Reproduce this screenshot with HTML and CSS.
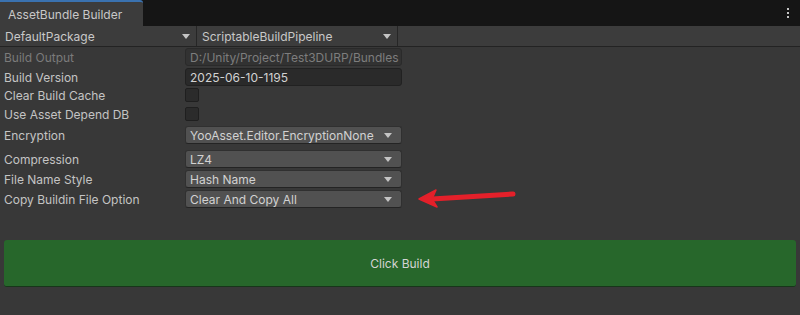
FILE: index.html
```html
<!DOCTYPE html>
<html>
<head>
<meta charset="utf-8">
<link rel="stylesheet" href="styles.css">
</head>
<body>
<div class="tabbar">
  <div class="tab">AssetBundle Builder</div>
  <div class="kebab"><span></span><span></span><span></span></div>
</div>
<div class="toolbar">
  <div class="tb-drop tb-first"><span>DefaultPackage</span><i class="caret"></i></div>
  <div class="tb-drop tb-second"><span>ScriptableBuildPipeline</span><i class="caret"></i></div>
</div>
<div class="content">
  <div class="row">
    <div class="label disabled">Build Output</div>
    <div class="field text disabled-field">D:/Unity/Project/Test3DURP/Bundles</div>
  </div>
  <div class="row">
    <div class="label">Build Version</div>
    <div class="field text">2025-06-10-1195</div>
  </div>
  <div class="row check-row">
    <div class="label">Clear Build Cache</div>
    <div class="checkbox"></div>
  </div>
  <div class="row check-row">
    <div class="label">Use Asset Depend DB</div>
    <div class="checkbox"></div>
  </div>
  <div class="row group-end">
    <div class="label">Encryption</div>
    <div class="field drop"><span>YooAsset.Editor.EncryptionNone</span><i class="caret"></i></div>
  </div>
  <div class="row">
    <div class="label">Compression</div>
    <div class="field drop"><span>LZ4</span><i class="caret"></i></div>
  </div>
  <div class="row">
    <div class="label">File Name Style</div>
    <div class="field drop"><span>Hash Name</span><i class="caret"></i></div>
  </div>
  <div class="row">
    <div class="label">Copy Buildin File Option</div>
    <div class="field drop"><span>Clear And Copy All</span><i class="caret"></i></div>
  </div>
  <div class="build-btn">Click Build</div>
</div>
<svg class="annot" width="800" height="315" viewBox="0 0 800 315">
  <line x1="513" y1="194" x2="432" y2="199" stroke="#e4202a" stroke-width="5" stroke-linecap="round"/>
  <polygon points="419,199 436,190 432,199 437,207" fill="#e4202a" stroke="#e4202a" stroke-width="1.5" stroke-linejoin="round"/>
</svg>
</body>
</html>
```
FILE: styles.css
```css
* { box-sizing: border-box; }
html, body {
  margin: 0;
  padding: 0;
  background: #383838;
  font-family: Inter, "Noto Sans", "Liberation Sans", sans-serif;
  font-size: 12px;
  color: #c4c4c4;
  width: 800px;
  height: 315px;
  overflow: hidden;
  position: relative;
}
.tabbar {
  height: 26px;
  background: #151515;
  display: flex;
  align-items: stretch;
  justify-content: space-between;
}
.tab {
  width: 143px;
  background: #3c3c3c;
  border-top: 2px solid #3a72b0;
  border-top-right-radius: 3px;
  padding-left: 8px;
  display: flex;
  align-items: center;
  color: #c8c8c8;
  font-size: 12px;
}
.kebab {
  display: flex;
  flex-direction: column;
  gap: 2px;
  padding: 8px 11px 0 0;
}
.kebab span {
  width: 2px;
  height: 2px;
  background: #c4c4c4;
}
.toolbar {
  height: 21px;
  background: #3c3c3c;
  border-bottom: 1px solid #232323;
  display: flex;
}
.tb-drop {
  display: flex;
  align-items: center;
  justify-content: space-between;
  border-right: 1px solid #262626;
  color: #c8c8c8;
}
.tb-first { width: 197px; padding: 0 4px 0 5px; }
.tb-second { width: 201px; padding: 0 4px 0 5px; }
.caret {
  width: 0;
  height: 0;
  border-left: 4px solid transparent;
  border-right: 4px solid transparent;
  border-top: 5px solid #c4c4c4;
  margin-right: 2px;
}
.content {
  padding: 1px 0 0 4px;
  display: flex;
  flex-direction: column;
}
.row {
  display: flex;
  align-items: center;
  height: 18px;
  margin-bottom: 2px;
}
.row.check-row { height: 17px; align-items: flex-start; }
.row.check-row .label { line-height: 15px; }
.row.group-end { margin-bottom: 6px; }
.label {
  width: 181px;
  flex: none;
  white-space: nowrap;
}
.label.disabled { color: #7b7b7b; }
.field {
  width: 217px;
  height: 18px;
  border-radius: 3px;
  display: flex;
  align-items: center;
  padding: 0 4px 0 4px;
  white-space: nowrap;
  overflow: hidden;
}
.field.text {
  background: #2a2a2a;
  border: 1px solid #212121;
  color: #d2d2d2;
}
.field.disabled-field {
  background: #323232;
  border-color: #2a2a2a;
  color: #7d7d7d;
}
.field.drop {
  background: #515151;
  border: 1px solid #303030;
  border-bottom-color: #242424;
  justify-content: space-between;
  color: #d2d2d2;
}
.field.drop .caret { margin-right: 5px; }
.checkbox {
  width: 14px;
  height: 14px;
  background: #2b2b2b;
  border: 1px solid #1f1f1f;
  border-radius: 2px;
}
.build-btn {
  margin: 30px 0 0 0;
  width: 792px;
  height: 47px;
  background: #27672b;
  border-radius: 3px;
  border-bottom: 1px solid #17361a;
  display: flex;
  align-items: center;
  justify-content: center;
  color: #d4d4d4;
}
.annot {
  position: absolute;
  left: 0;
  top: 0;
  pointer-events: none;
}
```
